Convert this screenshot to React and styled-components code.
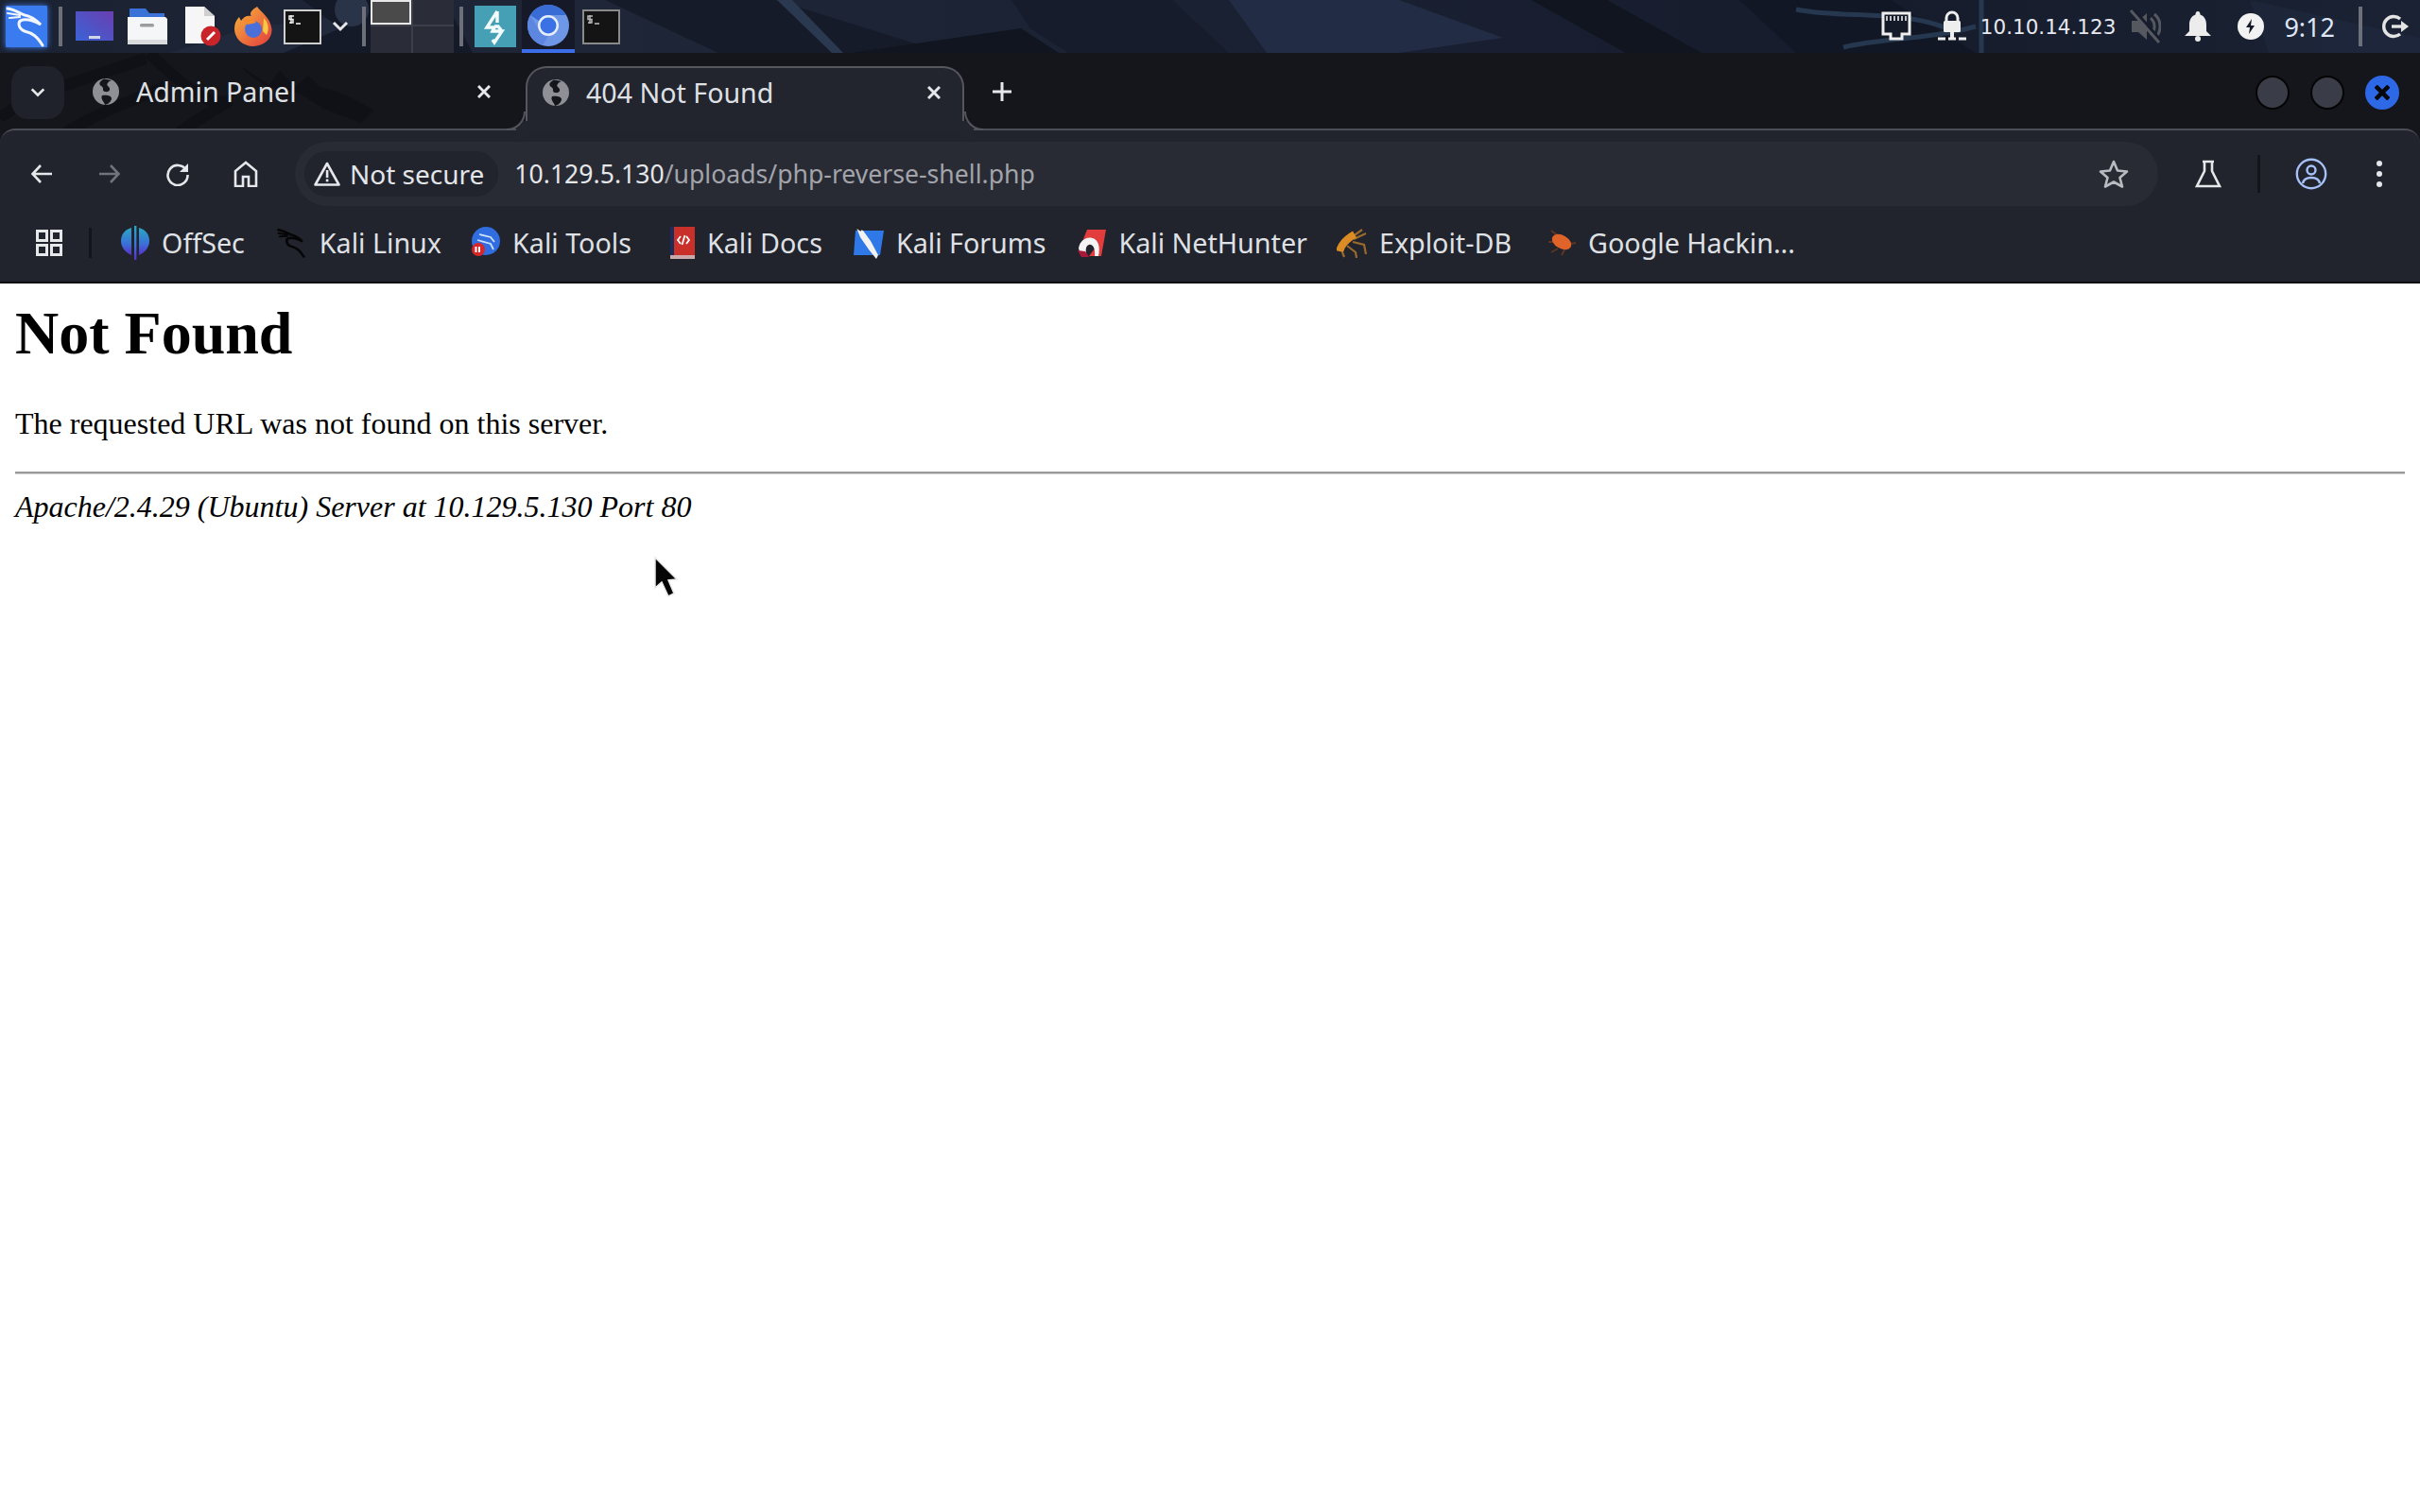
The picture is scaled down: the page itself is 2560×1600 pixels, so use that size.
import React from "react";
import styled, { createGlobalStyle } from "styled-components";

const Global = createGlobalStyle`
  html, body { margin: 0; padding: 0; background: #fff; }
  body { font-family: "Liberation Serif", serif; color: #000; }
`;

const Screen = styled.div`
  position: relative;
  width: 2560px;
  height: 1600px;
  overflow: hidden;
  display: flex;
  flex-direction: column;
  background: #fff;
`;

/* ---------- desktop panel ---------- */
const Panel = styled.header`
  position: relative;
  height: 56px;
  flex: none;
  display: flex;
  align-items: center;
  background: linear-gradient(90deg, #1b2232 0%, #1e2638 25%, #1a2133 50%, #161c2c 78%, #1a2233 100%);
  overflow: hidden;
`;
const Wallpaper = styled.svg`
  position: absolute;
  inset: 0;
`;
const PanelLeft = styled.div`
  position: relative;
  display: flex;
  align-items: center;
  height: 56px;
  padding-left: 6px;
`;
const PanelRight = styled.div`
  position: relative;
  display: flex;
  align-items: center;
  height: 56px;
  margin-left: auto;
  padding-right: 12px;
`;
const Launcher = styled.div`
  display: flex;
  align-items: center;
  justify-content: center;
  flex: none;
  width: ${(p) => p.$w}px;
  height: 56px;
  margin-left: ${(p) => p.$ml || 0}px;
`;
const PanelRule = styled.div`
  flex: none;
  width: 4px;
  height: 42px;
  background: #6d7079;
  margin-left: ${(p) => p.$ml || 0}px;
`;
const Pager = styled.div`
  flex: none;
  width: 88px;
  height: 56px;
  margin-left: 5px;
  display: grid;
  grid-template-columns: 1fr 1fr;
  grid-template-rows: 26px 1fr;
  gap: 2px;
  background: #3c3e49;
`;
const PagerCell = styled.div`
  background: ${(p) => (p.$active ? "#4a4a4a" : "#2a2c37")};
  border: ${(p) => (p.$active ? "2px solid #e8e8e8" : "none")};
  box-sizing: border-box;
`;
const ActiveLauncher = styled(Launcher)`
  background: #161a28;
  box-sizing: border-box;
  border-bottom: 4px solid #3b6ee8;
  padding-top: 2px;
`;
const TrayText = styled.span`
  flex: none;
  font-family: "DejaVu Sans", sans-serif;
  font-size: 21.5px;
  color: #e6e8ee;
  margin-left: ${(p) => p.$ml || 0}px;
`;
const Clock = styled.span`
  flex: none;
  font-family: "Noto Sans", sans-serif;
  font-size: 27px;
  color: #dfe6f5;
  margin-left: ${(p) => p.$ml || 0}px;
`;

/* ---------- browser chrome ---------- */
const BrowserChrome = styled.div`
  flex: none;
  background: #15161b;
`;
const TabStrip = styled.div`
  position: relative;
  z-index: 1;
  height: 80px;
  display: flex;
  align-items: flex-start;
  gap: 12px;
  padding: 0 22px 0 12px;
  box-sizing: border-box;
`;
const Dragon = styled.svg`
  position: absolute;
  left: 0;
  top: 0;
`;
const TabSearch = styled.div`
  position: relative;
  flex: none;
  width: 56px;
  height: 56px;
  margin-top: 14px;
  border-radius: 18px;
  background: #20222b;
  display: flex;
  align-items: center;
  justify-content: center;
`;
const Tab = styled.div`
  position: relative;
  flex: none;
  width: 464px;
  height: 68px;
  margin-top: 14px;
  padding: 0 25px 15px 18px;
  box-sizing: border-box;
  display: flex;
  align-items: center;
  gap: 18px;
  font-family: "Noto Sans", sans-serif;
  font-size: 28.6px;
  color: #dfe1e5;
  ${(p) =>
    p.$active &&
    `
    background: #22242e;
    border: 2px solid #55565e;
    border-bottom: none;
    border-radius: 22px 22px 0 0;
    padding: 0 23px 15px 16px;
    &::before, &::after {
      content: "";
      position: absolute;
      bottom: 0;
      width: 20px;
      height: 20px;
      box-sizing: border-box;
      border-bottom: 2px solid #55565e;
    }
    &::before {
      left: -22px;
      border-right: 2px solid #55565e;
      border-bottom-right-radius: 20px;
      box-shadow: 10px 10px 0 0 #22242e;
    }
    &::after {
      right: -22px;
      border-left: 2px solid #55565e;
      border-bottom-left-radius: 20px;
      box-shadow: -10px 10px 0 0 #22242e;
    }
  `}
`;
const TabTitle = styled.span`
  flex: 1;
  white-space: nowrap;
`;
const NewTab = styled.div`
  position: relative;
  flex: none;
  margin: 28px 0 0 18px;
  width: 20px;
  height: 26px;
  display: flex;
  align-items: center;
  justify-content: center;
`;
const WindowControls = styled.div`
  position: relative;
  margin-left: auto;
  margin-top: 24px;
  display: flex;
  gap: 22px;
`;
const WindowDot = styled.div`
  width: 36px;
  height: 36px;
  box-sizing: border-box;
  border-radius: 50%;
  background: ${(p) => (p.$close ? "#2d69e6" : "#3a3c47")};
  border: ${(p) => (p.$close ? "none" : "2px solid #050506")};
  display: flex;
  align-items: center;
  justify-content: center;
`;

const ChromeBody = styled.div`
  height: 164px;
  box-sizing: border-box;
  background: #21232d;
  border-top: 2px solid #4c4d55;
  border-bottom: 2px solid #0c0d11;
  border-radius: 16px 16px 0 0;
  padding-top: 12px;
  display: flex;
  flex-direction: column;
`;
const Toolbar = styled.div`
  height: 68px;
  flex: none;
  display: flex;
  align-items: center;
  padding-left: 8px;
`;
const NavButton = styled.div`
  flex: none;
  width: 72px;
  height: 68px;
  display: flex;
  align-items: center;
  justify-content: center;
`;
const AddressBar = styled.div`
  flex: none;
  width: 1971px;
  height: 68px;
  margin-left: 16px;
  box-sizing: border-box;
  border-radius: 34px;
  background: #282a34;
  display: flex;
  align-items: center;
  padding: 0 31px 0 10px;
  font-family: "Noto Sans", sans-serif;
  font-size: 28px;
`;
const SecurityChip = styled.div`
  flex: none;
  height: 48px;
  box-sizing: border-box;
  border-radius: 24px;
  background: #21232d;
  display: flex;
  align-items: center;
  gap: 10px;
  padding: 0 15px 0 10px;
  color: #e3e5e9;
`;
const Url = styled.div`
  margin-left: 17px;
  padding-bottom: 1px;
  font-size: 26.6px;
  color: #a2a4aa;
  white-space: nowrap;
  flex: 1;
`;
const UrlHost = styled.span`
  color: #e6e7ea;
`;
const ToolSlot = styled.div`
  flex: none;
  width: ${(p) => p.$w}px;
  margin-left: ${(p) => p.$ml}px;
  display: flex;
  align-items: center;
  justify-content: center;
`;
const ToolRule = styled.div`
  flex: none;
  width: 3px;
  height: 40px;
  margin-left: 37px;
  background: #14151b;
`;
const BookmarkBar = styled.div`
  height: 80px;
  flex: none;
  box-sizing: border-box;
  padding: 0 0 3px 38px;
  display: flex;
  align-items: center;
  font-family: "Noto Sans", sans-serif;
  font-size: 28.7px;
  color: #dfe1e5;
`;
const BookmarkRule = styled.div`
  flex: none;
  width: 3px;
  height: 32px;
  margin: 0 31px 0 28px;
  background: #14151b;
`;
const Bookmark = styled.div`
  flex: none;
  display: flex;
  align-items: center;
  gap: 13px;
  margin-right: ${(p) => p.$mr}px;
  white-space: nowrap;
`;
const Favicon = styled.svg`
  flex: none;
  display: block;
`;

/* ---------- server page ---------- */
const ServerPage = styled.main`
  padding: 16px;
`;
const Heading = styled.h1`
  margin: 0 0 40px;
  font-size: 64px;
  font-weight: bold;
`;
const Paragraph = styled.p`
  margin: 0 0 32px;
  font-size: 32px;
`;
const Divider = styled.hr`
  margin: 0 0 16px;
  height: 0;
  border: none;
  border-top: 2px solid #9a9a9a;
  border-bottom: 1px solid #d0d0d0;
`;
const Signature = styled.address`
  font-size: 32px;
  font-style: italic;
`;
const Pointer = styled.svg`
  position: absolute;
  left: 688px;
  top: 587px;
`;

/* ---------- drawings ---------- */
const DRAGON = "M2 3C10 4 14 8 20 10C26 11 31 14 37 20C30 16 24 14 18 15C12 16 13 24 20 27C28 29 33 32 39 42";
const KaliMark = ({ size = 44 }) => (
  <svg width={size} height={size} viewBox="0 0 44 44" style={{ filter: "drop-shadow(0 0 3px #3d7df0)" }}>
    <rect width="44" height="44" rx="1" fill="#3a7cf0" />
    <g fill="none" stroke="#f2f6ff" strokeWidth="3" strokeLinecap="round">
      <path d={DRAGON} />
      <path d="M2 8L15 10M4 13L15 12" strokeWidth="2.2" />
    </g>
  </svg>
);
const Workspace = () => (
  <svg width="40" height="32" viewBox="0 0 40 32">
    <defs>
      <linearGradient id="ws" x1="0" y1="1" x2="1" y2="0">
        <stop offset="0" stopColor="#3a63d6" />
        <stop offset="1" stopColor="#6a3fb0" />
      </linearGradient>
    </defs>
    <rect width="40" height="31" fill="url(#ws)" />
    <rect x="14" y="26" width="12" height="3" fill="#cfd6ea" />
  </svg>
);
const Folder = () => (
  <svg width="42" height="38" viewBox="0 0 42 38">
    <path d="M2 0H19L23 5H39V14H2Z" fill="#3a72d8" />
    <path d="M0 9H40L42 11V37H0Z" fill="#f5f6f7" />
    <rect x="13" y="16" width="15" height="3.5" rx="1.5" fill="#9b9da1" />
    <path d="M0 33H42V38H0Z" fill="#d9dadc" />
  </svg>
);
const Note = () => (
  <svg width="38" height="42" viewBox="0 0 38 42">
    <path d="M0 0H20L31 10V39H0Z" fill="#f6f6f6" />
    <path d="M20 0L31 10H20Z" fill="#cfcfcf" />
    <circle cx="27" cy="31" r="10.5" fill="#c8242a" />
    <path d="M23 35L31 27" stroke="#fff" strokeWidth="3" />
  </svg>
);
const Firefox = () => (
  <svg width="40" height="42" viewBox="0 0 40 42">
    <defs>
      <linearGradient id="fx" x1="0" y1="0" x2="1" y2="1">
        <stop offset="0" stopColor="#f8b73a" />
        <stop offset="1" stopColor="#e23a3e" />
      </linearGradient>
    </defs>
    <path d="M24 0C28 6 38 11 39.5 24C40 34 31 42 20 42C9 42 0 34 0 23C0 18 2 14 5 11L7 15C10 10 14 9 18 10C15 7 19 3 24 0Z" fill="url(#fx)" />
    <path d="M31 12C36 17 37 24 34 30L30 26Z" fill="#f9c842" />
    <circle cx="20" cy="24" r="9" fill="#4a6fd8" />
    <path d="M9 14C14 12 20 13 23 17L14 19Z" fill="#f58a2c" />
  </svg>
);
const Terminal = ({ dim }) => (
  <svg width="40" height="37" viewBox="0 0 40 37">
    <rect x="1" y="1" width="38" height="35" fill="#141414" stroke={dim ? "#8a8a8a" : "#cfcfcf"} strokeWidth="2" />
    <path d="M8 6V15M11 7H6V10.5H10V14H6" stroke={dim ? "#b8b8b8" : "#f0f0f0"} strokeWidth="1.5" fill="none" />
    <path d="M13 15H18" stroke={dim ? "#b8b8b8" : "#f0f0f0"} strokeWidth="1.6" />
  </svg>
);
const Chevron = ({ size = 20, color = "#e6e7ea", sw = 3 }) => (
  <svg width={size} height={size} viewBox="0 0 20 20">
    <path d="M3 6L10 13L17 6" fill="none" stroke={color} strokeWidth={sw} />
  </svg>
);
const Burp = () => (
  <svg width="44" height="44" viewBox="0 0 44 44">
    <rect width="44" height="44" fill="#45a0b6" />
    <path d="M24 6L13 23H21L19 27H29L21 39L19 36M24 6V18M29 27L25 22H21" fill="none" stroke="#f2fbfd" strokeWidth="3.4" />
  </svg>
);
const Chromium = ({ size = 44 }) => (
  <svg width={size} height={size} viewBox="0 0 44 44">
    <circle cx="22" cy="22" r="22" fill="#6f97e8" />
    <path d="M3 11A22 22 0 0 1 41 11H22A11 11 0 0 0 12 17Z" fill="#3a6cd6" />
    <path d="M3 11L13 28A11 11 0 0 0 22 33L16 43A22 22 0 0 1 3 11Z" fill="#5c86e0" />
    <circle cx="22" cy="22" r="11" fill="#e6edfb" />
    <circle cx="22" cy="22" r="8.5" fill="#3a72e6" />
  </svg>
);
const NetworkPort = () => (
  <svg width="32" height="32" viewBox="0 0 32 32">
    <path d="M2 2H30V24H22V29H10V24H2Z" fill="#141a28" stroke="#eeeeee" strokeWidth="3" strokeLinejoin="miter" />
    <path d="M6 5V10M10 5V10M14 5V10M18 5V10M22 5V10M26 5V10" stroke="#eeeeee" strokeWidth="1.6" />
  </svg>
);
const VpnLock = () => (
  <svg width="30" height="34" viewBox="0 0 30 34">
    <path d="M9 12V8A6 6 0 0 1 21 8V12" fill="none" stroke="#eee" strokeWidth="3" />
    <rect x="6" y="11" width="18" height="12" rx="1.5" fill="#eee" />
    <rect x="13" y="23" width="4" height="6" fill="#eee" />
    <path d="M0 30H8M11 30H19M22 30H30" stroke="#eee" strokeWidth="3" />
  </svg>
);
const MutedSpeaker = () => (
  <svg width="34" height="36" viewBox="0 0 34 36">
    <path d="M3 12H10L19 4V32L10 24H3Z" fill="#55585e" />
    <path d="M23 9A12 12 0 0 1 23 27M27 5A17 17 0 0 1 27 31" fill="none" stroke="#55585e" strokeWidth="3" />
    <path d="M5 0L35 34" stroke="#161c2c" strokeWidth="3" />
    <path d="M2 1L32 35" stroke="#55585e" strokeWidth="3" />
  </svg>
);
const Bell = () => (
  <svg width="28" height="34" viewBox="0 0 28 34">
    <path d="M14 1C16 1 16.5 3 16.5 4.5C21 6 23 10 23 15V22L28 27H0L5 22V15C5 10 7 6 11.5 4.5C11.5 3 12 1 14 1Z" fill="#ececec" />
    <circle cx="14" cy="30" r="3" fill="#ececec" />
  </svg>
);
const PowerBolt = () => (
  <svg width="28" height="28" viewBox="0 0 28 28">
    <circle cx="14" cy="14" r="14" fill="#f2f2f2" />
    <path d="M15 6L9 15H13L12 22L18 13H14Z" fill="#151a28" />
  </svg>
);
const Logout = () => (
  <svg width="28" height="28" viewBox="0 0 28 28">
    <path d="M19 6A10.5 10.5 0 1 0 19 22" fill="none" stroke="#e4e4e4" strokeWidth="3.4" />
    <path d="M10 14H22" stroke="#e4e4e4" strokeWidth="3.4" />
    <path d="M20 8L28 14L20 20Z" fill="#e4e4e4" />
  </svg>
);
const Globe = () => (
  <svg width="28" height="28" viewBox="0 0 28 28">
    <circle cx="14" cy="14" r="14" fill="#8e9095" />
    <path d="M12 0.5C7 3 6 6 9 8C13 10 9 13 13 14C18 15 20 11 16 8C14 6 17 3 20 2ZM10 18C14 17 20 18 20 21C20 24 17 27 13 28C12 24 8 22 10 18Z" fill="#15161b" />
  </svg>
);
const Cross = ({ size = 14, color = "#e6e7ea", sw = 3 }) => (
  <svg width={size} height={size} viewBox="0 0 14 14">
    <path d="M1 1L13 13M13 1L1 13" stroke={color} strokeWidth={sw} />
  </svg>
);
const Warning = () => (
  <svg width="28" height="26" viewBox="0 0 28 26">
    <path d="M14 2L26.5 24.5H1.5Z" fill="none" stroke="#e6e7ea" strokeWidth="2.6" strokeLinejoin="round" />
    <rect x="12.8" y="9" width="2.6" height="8" fill="#e6e7ea" />
    <rect x="12.8" y="18.5" width="2.6" height="2.8" fill="#e6e7ea" />
  </svg>
);
const Icon = ({ children, w = 32, h = 32 }) => (
  <svg width={w} height={h} viewBox={`0 0 ${w} ${h}`} fill="none">
    {children}
  </svg>
);

const bookmarks = [
  {
    name: "OffSec",
    mr: 34,
    icon: (
      <Favicon width="30" height="36" viewBox="0 0 30 36">
        <defs>
          <linearGradient id="of" x1="0" y1="0" x2="0" y2="1">
            <stop offset="0" stopColor="#2aa7c4" />
            <stop offset="0.6" stopColor="#3b6fd8" />
            <stop offset="1" stopColor="#5b2fc8" />
          </linearGradient>
        </defs>
        <path d="M11 2C4 4 0 9 0 16C0 22 4 28 11 31Z" fill="url(#of)" />
        <path d="M19 2C26 4 30 9 30 16C30 22 26 28 19 31Z" fill="url(#of)" />
        <rect x="14" y="0" width="2.4" height="36" fill="url(#of)" />
      </Favicon>
    ),
  },
  {
    name: "Kali Linux",
    mr: 32,
    icon: (
      <Favicon width="32" height="36" viewBox="0 0 44 44">
        <g fill="none" stroke="#050506" strokeWidth="3.4" strokeLinecap="round">
          <path d={DRAGON} />
          <path d="M2 8L15 10M4 13L15 12" strokeWidth="2.5" />
        </g>
      </Favicon>
    ),
  },
  {
    name: "Kali Tools",
    mr: 41,
    icon: (
      <Favicon width="30" height="34" viewBox="0 0 30 34">
        <circle cx="15" cy="15" r="15" fill="#2f6de0" />
        <path d="M8 8L20 11L24 16M6 14L20 18L23 24" fill="none" stroke="#cfe0fb" strokeWidth="1.8" />
        <circle cx="7" cy="24" r="7" fill="#d62828" />
        <path d="M4.5 21V27M8 21V27" stroke="#fff" strokeWidth="2" />
      </Favicon>
    ),
  },
  {
    name: "Kali Docs",
    mr: 33,
    icon: (
      <Favicon width="26" height="34" viewBox="0 0 26 34">
        <rect width="26" height="34" fill="#c9302a" />
        <rect width="4" height="30" fill="#1b2b5a" />
        <rect y="30" width="26" height="4" fill="#c9a9a9" />
        <path d="M11 10L8 14L11 18M17 10L20 14L17 18M15.5 9L12.5 19" fill="none" stroke="#fff" strokeWidth="1.8" />
      </Favicon>
    ),
  },
  {
    name: "Kali Forums",
    mr: 32,
    icon: (
      <Favicon width="32" height="36" viewBox="0 0 32 36">
        <path d="M2 5H32L28 31H0Z" fill="#2f78e8" />
        <path d="M3 2L10 5L18 16L26 31L24 35L16 25L7 12Z" fill="#f2f2f2" />
        <path d="M2 1L8 5" stroke="#222" strokeWidth="2" />
      </Favicon>
    ),
  },
  {
    name: "Kali NetHunter",
    mr: 31,
    icon: (
      <Favicon width="32" height="32" viewBox="0 0 32 32">
        <path d="M12 2H32L27 30H14L20 22C18 14 14 15 12 18L8 12Z" fill="#e23c3c" />
        <path d="M3 22C4 12 14 8 20 12C24 15 26 20 24 30H20C21 22 18 17 14 18C10 19 10 25 12 30H6Z" fill="#f4f4f4" />
        <path d="M2 24L6 31H14L10 25Z" fill="#a81838" />
      </Favicon>
    ),
  },
  {
    name: "Exploit-DB",
    mr: 38,
    icon: (
      <Favicon width="32" height="32" viewBox="0 0 32 32">
        <path d="M16 10L27 2M18 12L31 6M17 15L29 18L31 28M11 19L20 26L21 32M6 26L8 31" fill="none" stroke="#9a6a2c" strokeWidth="2.2" />
        <path d="M3 25C5 17 12 11 19 7" fill="none" stroke="#dc8c24" strokeWidth="8" />
      </Favicon>
    ),
  },
  {
    name: "Google Hackin...",
    mr: 0,
    icon: (
      <Favicon width="30" height="30" viewBox="0 0 30 30">
        <path d="M4 2L12 8M1 14L6 14M4 25L11 21M15 28L18 22M24 16L30 15" stroke="#5e3522" strokeWidth="2" />
        <ellipse cx="15" cy="14" rx="11" ry="7" transform="rotate(30 15 14)" fill="#e0642a" />
      </Favicon>
    ),
  },
];

export default function App() {
  return (
    <Screen>
      <Global />
      <Panel>
        <Wallpaper width="2560" height="56" viewBox="0 0 2560 56">
          <path d="M180 56L260 30L420 10L340 56Z" fill="#212a3d" />
          <path d="M320 0L360 30L300 56H500L470 0Z" fill="#151a28" />
          <circle cx="372" cy="10" r="18" fill="#2a3448" />
          <path d="M640 0H820L1000 56H760Z" fill="#161b29" />
          <path d="M822 0L880 56H892L838 0Z" fill="#2a3850" />
          <path d="M1070 0L1090 30L1130 56H1300L1240 0Z" fill="#161c2c" />
          <path d="M1080 30L900 56H1120Z" fill="#11151f" />
          <path d="M1300 0H1480L1590 40L1480 56H1340Z" fill="#222c44" />
          <path d="M1620 0L1720 56H1800L1700 0Z" fill="#11151f" />
          <path d="M1840 0H2000L2090 56H1900Z" fill="#121725" />
          <path d="M1900 10C1950 20 2010 10 2060 30M1950 50C1990 40 2040 42 2090 28M2096 0V56" fill="none" stroke="#263850" strokeWidth="5" />
          <path d="M2380 0L2560 40V56H2400Z" fill="#1f2a40" opacity="0.6" />
        </Wallpaper>
        <PanelLeft>
          <KaliMark />
          <PanelRule $ml={12} />
          <Launcher $w={40} $ml={14}><Workspace /></Launcher>
          <Launcher $w={42} $ml={15}><Folder /></Launcher>
          <Launcher $w={38} $ml={19}><Note /></Launcher>
          <Launcher $w={40} $ml={14}><Firefox /></Launcher>
          <Launcher $w={40} $ml={12}><Terminal /></Launcher>
          <Launcher $w={20} $ml={10}><Chevron /></Launcher>
          <PanelRule $ml={13} />
          <Pager>
            <PagerCell $active />
            <PagerCell />
            <PagerCell />
            <PagerCell />
          </Pager>
          <PanelRule $ml={6} />
          <Launcher $w={44} $ml={12}><Burp /></Launcher>
          <ActiveLauncher $w={56} $ml={6}><Chromium /></ActiveLauncher>
          <Launcher $w={40} $ml={8}><Terminal dim /></Launcher>
        </PanelLeft>
        <PanelRight>
          <Launcher $w={32}><NetworkPort /></Launcher>
          <Launcher $w={30} $ml={28}><VpnLock /></Launcher>
          <TrayText $ml={15}>10.10.14.123</TrayText>
          <Launcher $w={34} $ml={14}><MutedSpeaker /></Launcher>
          <Launcher $w={28} $ml={25}><Bell /></Launcher>
          <Launcher $w={28} $ml={28}><PowerBolt /></Launcher>
          <Clock $ml={21}>9:12</Clock>
          <PanelRule $ml={25} />
          <Launcher $w={28} $ml={21}><Logout /></Launcher>
        </PanelRight>
      </Panel>

      <BrowserChrome>
        <TabStrip>
          <Dragon width="1040" height="80" viewBox="0 0 1040 80">
            <g fill="none" stroke="#101116" strokeWidth="12">
              <path d="M0 68C40 40 90 28 154 6" />
              <path d="M157 0C190 30 220 60 244 50C210 70 195 80 190 84" />
              <path d="M70 84C110 60 140 50 175 36" />
            </g>
            <path d="M255 14L285 34L296 18L312 36L326 24L338 36C360 40 372 48 396 60L382 74L345 60C325 50 320 40 300 40C280 36 262 24 255 14Z" fill="#101116" />
          </Dragon>
          <TabSearch><Chevron size={18} color="#e6e7ea" sw={3} /></TabSearch>
          <Tab>
            <Globe />
            <TabTitle>Admin Panel</TabTitle>
            <Cross />
          </Tab>
          <Tab $active>
            <Globe />
            <TabTitle>404 Not Found</TabTitle>
            <Cross />
          </Tab>
          <NewTab>
            <svg width="20" height="20" viewBox="0 0 20 20">
              <path d="M10 0V20M0 10H20" stroke="#e6e7ea" strokeWidth="3" />
            </svg>
          </NewTab>
          <WindowControls>
            <WindowDot />
            <WindowDot />
            <WindowDot $close><Cross size={16} color="#05070c" sw={4} /></WindowDot>
          </WindowControls>
        </TabStrip>

        <ChromeBody>
          <Toolbar>
            <NavButton>
              <Icon w={24} h={24}>
                <path d="M23 12H3M11 3L2.5 12L11 21" stroke="#e6e7ea" strokeWidth="2.6" />
              </Icon>
            </NavButton>
            <NavButton>
              <Icon w={24} h={24}>
                <path d="M1 12H21M13 3L21.5 12L13 21" stroke="#71737b" strokeWidth="2.6" />
              </Icon>
            </NavButton>
            <NavButton>
              <Icon w={26} h={26}>
                <path d="M22 9A10.5 10.5 0 1 0 23.5 14" stroke="#e6e7ea" strokeWidth="2.6" />
                <path d="M24 2V11H15Z" fill="#e6e7ea" />
              </Icon>
            </NavButton>
            <NavButton>
              <Icon w={26} h={28}>
                <path d="M2 27V11L13 2L24 11V27H16V17H10V27Z" stroke="#e6e7ea" strokeWidth="2.6" />
              </Icon>
            </NavButton>
            <AddressBar>
              <SecurityChip>
                <Warning />
                Not secure
              </SecurityChip>
              <Url>
                <UrlHost>10.129.5.130</UrlHost>/uploads/php-reverse-shell.php
              </Url>
              <Icon w={32} h={30}>
                <path d="M16 2L20 11.5L30 12.5L22.5 19L25 28.5L16 23.5L7 28.5L9.5 19L2 12.5L12 11.5Z" stroke="#b9bbc0" strokeWidth="2.6" strokeLinejoin="round" />
              </Icon>
            </AddressBar>
            <ToolSlot $w={30} $ml={38}>
              <Icon w={28} h={30}>
                <path d="M8 2H20M10 2V12L2 28H26L18 12V2" stroke="#e6e7ea" strokeWidth="2.6" />
              </Icon>
            </ToolSlot>
            <ToolRule />
            <ToolSlot $w={34} $ml={37}>
              <Icon w={34} h={34}>
                <circle cx="17" cy="17" r="15.2" stroke="#a5c1f7" strokeWidth="2.4" />
                <circle cx="17" cy="13" r="4.5" stroke="#a5c1f7" strokeWidth="2.4" />
                <path d="M8 27C9 22 13 21 17 21C21 21 25 22 26 27" stroke="#a5c1f7" strokeWidth="2.4" />
              </Icon>
            </ToolSlot>
            <ToolSlot $w={8} $ml={51}>
              <Icon w={8} h={30}>
                <circle cx="4" cy="4" r="3" fill="#e6e7ea" />
                <circle cx="4" cy="15" r="3" fill="#e6e7ea" />
                <circle cx="4" cy="26" r="3" fill="#e6e7ea" />
              </Icon>
            </ToolSlot>
          </Toolbar>
          <BookmarkBar>
            <Icon w={28} h={28}>
              <path d="M1.5 1.5H11.5V11.5H1.5ZM16.5 1.5H26.5V11.5H16.5ZM1.5 16.5H11.5V26.5H1.5ZM16.5 16.5H26.5V26.5H16.5Z" stroke="#e6e7ea" strokeWidth="3" />
            </Icon>
            <BookmarkRule />
            {bookmarks.map((b) => (
              <Bookmark key={b.name} $mr={b.mr}>
                {b.icon}
                {b.name}
              </Bookmark>
            ))}
          </BookmarkBar>
        </ChromeBody>
      </BrowserChrome>

      <ServerPage>
        <Heading>Not Found</Heading>
        <Paragraph>The requested URL was not found on this server.</Paragraph>
        <Divider />
        <Signature>Apache/2.4.29 (Ubuntu) Server at 10.129.5.130 Port 80</Signature>
      </ServerPage>

      <Pointer width="30" height="50" viewBox="0 0 30 48">
        <path d="M5 2V34L12 28L19 43L25 40L19 26L28 25Z" fill="#050505" stroke="#e8e8e8" strokeWidth="1.5" />
      </Pointer>
    </Screen>
  );
}
